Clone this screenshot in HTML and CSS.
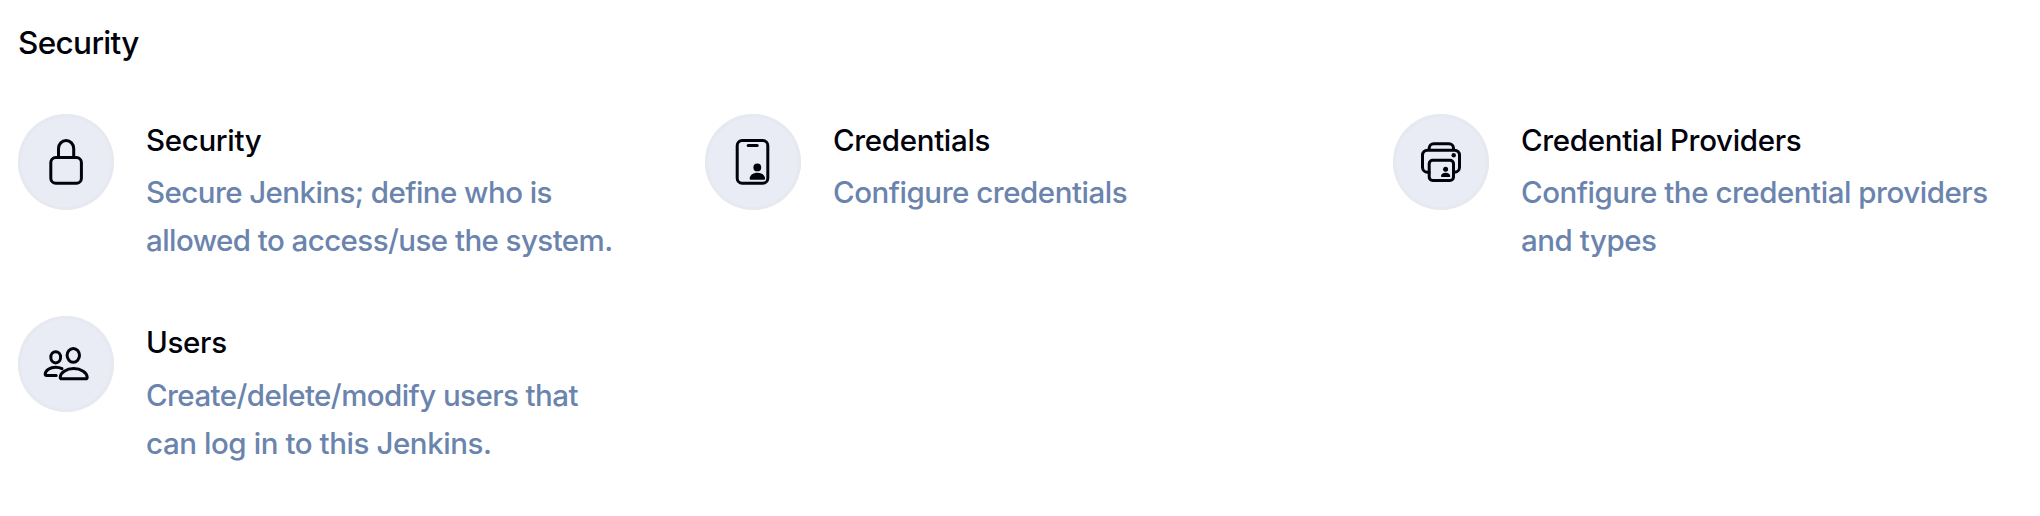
FILE: index.html
```html
<!DOCTYPE html>
<html lang="en">
<head>
<meta charset="utf-8">
<title>Security</title>
<link rel="stylesheet" href="styles.css">
</head>
<body>
<section class="section">
  <h2 class="section-title">Security</h2>
  <div class="items">
    <a class="item">
      <div class="icon">
        <svg viewBox="0 0 96 96"><rect x="32.8" y="43.5" width="30.6" height="25.7" rx="5"/><path d="M40.5 43V34.5a7.6 8 0 0 1 15.2 0V43"/></svg>
      </div>
      <div class="text">
        <h3 class="title">Security</h3>
        <p class="desc desc-tight">Secure Jenkins; define who is<br>allowed to access/use the system.</p>
      </div>
    </a>
    <a class="item">
      <div class="icon">
        <svg viewBox="0 0 96 96"><rect x="32.2" y="26.5" width="30.6" height="42.7" rx="5"/><path d="M43.2 31.5h9"/><circle class="solid" cx="52.3" cy="53.4" r="3.9"/><path class="solid" d="M44.7 64.4c0-3.2 3.5-5.6 7.7-5.6s7.7 2.4 7.7 5.6c0 .9-.4 1.3-1.2 1.3H45.9c-.8 0-1.2-.4-1.2-1.3z"/></svg>
      </div>
      <div class="text">
        <h3 class="title">Credentials</h3>
        <p class="desc">Configure credentials</p>
      </div>
    </a>
    <a class="item">
      <div class="icon">
        <svg viewBox="0 0 96 96"><path d="M36.2 36v-1.7a4.5 4.5 0 0 1 4.5-4.5H56a4.5 4.5 0 0 1 4.5 4.5V36M36 58.2h-1.5a5 5 0 0 1-5-5V41.2a5 5 0 0 1 5-5h27a5 5 0 0 1 5 5v12a5 5 0 0 1-5 5H61"/><rect x="36.2" y="46.2" width="24.3" height="20.3" rx="3.5"/><circle class="solid" cx="60.7" cy="41.3" r="2.2"/><circle class="solid" cx="52.6" cy="55.3" r="2.5"/><path class="solid" d="M48 62.2c0-2 2-3.4 4.6-3.4s4.7 1.4 4.7 3.4c0 .5-.2.8-.7.8h-7.9c-.5 0-.7-.3-.7-.8z"/></svg>
      </div>
      <div class="text">
        <h3 class="title">Credential Providers</h3>
        <p class="desc">Configure the credential providers<br>and types</p>
      </div>
    </a>
    <a class="item item-users">
      <div class="icon">
        <svg viewBox="0 0 96 96"><ellipse cx="55.3" cy="39.3" rx="6.2" ry="6.9"/><path d="M43.8 62.8c-1.1 0-1.6-.6-1.6-1.6.2-4.5 6-8.7 13.5-8.7s13.3 4.2 13.5 8.7c0 1-.5 1.6-1.6 1.6z"/><ellipse cx="37.7" cy="41.3" rx="4.9" ry="5.6"/><path d="M44 52.6c-1.700-.9-4-1.4-6.300-1.400-5.800 0-10.200 3.300-10.500 6.900 0 .9.500 1.400 1.400 1.400h9.600"/></svg>
      </div>
      <div class="text">
        <h3 class="title">Users</h3>
        <p class="desc"><span class="desc-tight">Create/delete/modify users that</span><br><span class="desc-loose">can log in to this Jenkins.</span></p>
      </div>
    </a>
  </div>
</section>
</body>
</html>
```
FILE: styles.css
```css
body {
  margin: 0;
  background: #fff;
  color: #02020c;
  font-family: Inter, "Liberation Sans", sans-serif;
}
.section { padding: 18px 0 0 18px; }
.section-title {
  margin: 0 0 46px;
  font-size: 31.5px;
  line-height: 50px;
  font-weight: 500;
  letter-spacing: -0.65px;
}
.items {
  display: grid;
  grid-template-columns: 655px 656px 655px;
  gap: 54px 32px;
}
.item { display: flex; gap: 32px; height: 148px; }
.icon {
  flex: none;
  box-sizing: border-box;
  width: 96px;
  height: 96px;
  border-radius: 50%;
  background: #e9ecf4;
  box-shadow: inset 0 0 0 3px #e6e9f0;
}
.icon svg {
  display: block;
  width: 96px;
  height: 96px;
  fill: none;
  stroke: #02020c;
  stroke-width: 3;
  stroke-linecap: round;
  stroke-linejoin: round;
}
.icon .solid { fill: #02020c; stroke: none; }
.text { padding-top: 2px; white-space: nowrap; }
.title {
  margin: 0 0 4px;
  font-size: 29.5px;
  line-height: 48px;
  font-weight: 500;
  letter-spacing: -0.33px;
}
.item-users .title { margin-bottom: 5px; }
.desc {
  margin: 0;
  color: #6a84ae;
  font-size: 29.5px;
  line-height: 48px;
  font-weight: 450;
  letter-spacing: -0.47px;
}
.desc-tight { letter-spacing: -0.57px; }
.desc-loose { letter-spacing: -0.43px; }
```
